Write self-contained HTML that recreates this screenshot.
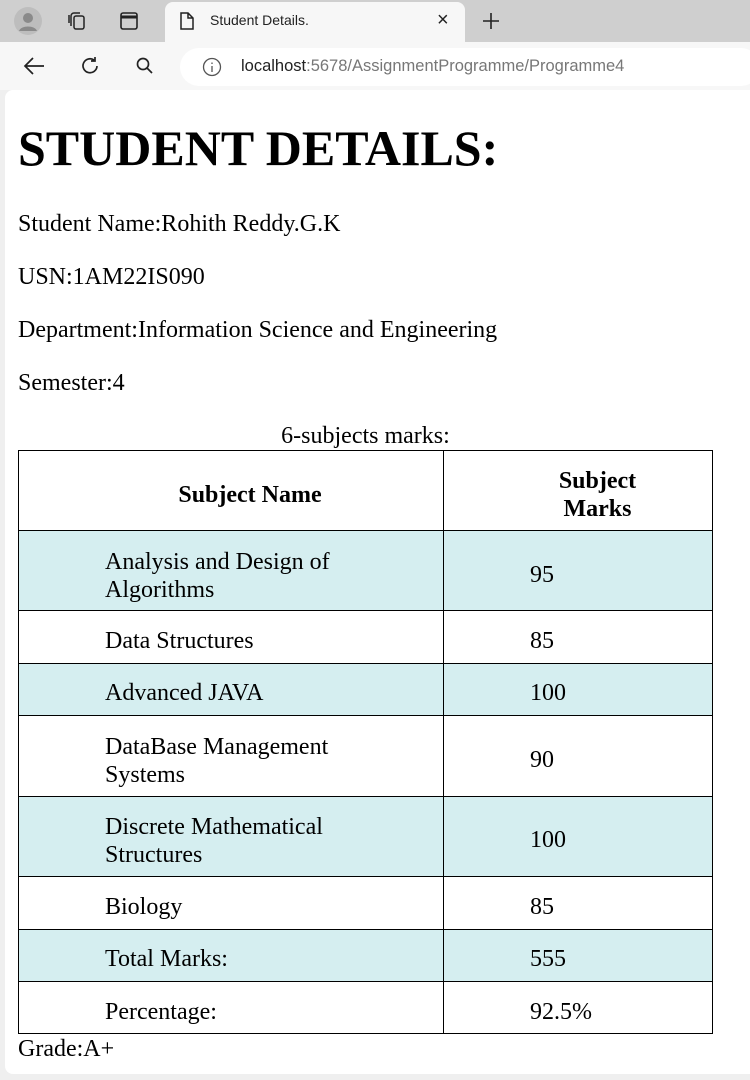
<!DOCTYPE html>
<html><head><meta charset="utf-8"><style>
*{margin:0;padding:0;box-sizing:border-box}
body{width:750px;height:1080px;background:#efefef;position:relative;overflow:hidden;font-family:"Liberation Serif",serif;color:#000}
.abs{position:absolute;white-space:nowrap}
.ui{font-family:"Liberation Sans",sans-serif}
.t{font-size:24px;line-height:28px}
.row{position:absolute;left:18px;width:695px;border:1px solid #000;border-top:none}
.c1{position:absolute;left:424px;top:0;bottom:0;border-left:1px solid #000}
</style></head><body>
<div class="abs" style="left:0;top:0;width:750px;height:42px;background:#cfcfcf"></div>
<div class="abs" style="left:165px;top:2px;width:300px;height:42px;background:#f7f7f7;border-radius:8px 8px 0 0"></div>
<div class="abs" style="left:0;top:42px;width:750px;height:48px;background:#f7f7f7"></div>
<svg class="abs" style="left:14px;top:7px" width="28" height="28" viewBox="0 0 28 28"><circle cx="14" cy="14" r="14" fill="#bdbdbd"/><circle cx="14" cy="11" r="5" fill="#8a8a8a"/><path d="M5 24c2-6 16-6 18 0" fill="#8a8a8a"/></svg>
<svg class="abs" style="left:66px;top:10px" width="22" height="22" viewBox="0 0 22 22" fill="none" stroke="#222" stroke-width="1.5"><rect x="8" y="6" width="10" height="13" rx="2"/><path d="M5 16V6a3 3 0 0 1 3-3h6"/><path d="M3 13V5"/></svg>
<svg class="abs" style="left:119px;top:11px" width="20" height="20" viewBox="0 0 20 20" fill="none" stroke="#222" stroke-width="1.6"><rect x="2" y="2" width="16" height="16" rx="2"/><path d="M2 6h16" stroke-width="3"/></svg>
<svg class="abs" style="left:178px;top:11px" width="18" height="20" viewBox="0 0 18 20" fill="none" stroke="#222" stroke-width="1.5"><path d="M3 2h7l5 5v11H3z M10 2v5h5"/></svg>
<div class="abs ui" style="left:210px;top:12px;font-size:14px;color:#222">Student Details.</div>
<div class="abs ui" style="left:437px;top:9px;font-size:20px;color:#222">×</div>
<svg class="abs" style="left:481px;top:11px" width="20" height="20" viewBox="0 0 20 20" stroke="#222" stroke-width="1.6"><path d="M10 2v16M2 10h16"/></svg>
<svg class="abs" style="left:22px;top:55px" width="24" height="22" viewBox="0 0 24 22" fill="none" stroke="#222" stroke-width="1.7"><path d="M22 11H3M11 3l-8 8 8 8"/></svg>
<svg class="abs" style="left:79px;top:55px" width="22" height="22" viewBox="0 0 22 22" fill="none" stroke="#222" stroke-width="1.7"><path d="M18 11a7 7 0 1 1-3-6M16 2v4h-4"/></svg>
<svg class="abs" style="left:135px;top:56px" width="20" height="20" viewBox="0 0 20 20" fill="none" stroke="#222" stroke-width="1.7"><circle cx="8" cy="8" r="5.5"/><path d="M12 12l5 5"/></svg>
<div class="abs" style="left:180px;top:48px;width:580px;height:38px;background:#fff;border-radius:19px"></div>
<svg class="abs" style="left:202px;top:57px" width="20" height="20" viewBox="0 0 20 20" fill="none" stroke="#555" stroke-width="1.3"><circle cx="10" cy="10" r="8.5"/><path d="M10 9v6M10 5.5v1.5"/></svg>
<div class="abs ui" style="left:241px;top:57px;font-size:16.5px;color:#222">localhost<span style="color:#777">:5678/AssignmentProgramme/Programme4</span></div>
<div class="abs" style="left:5px;top:90px;width:760px;height:984px;background:#fff;border-radius:8px"></div>
<div class="abs" style="left:18px;top:118px;font-size:50px;font-weight:bold;line-height:60px">STUDENT DETAILS:</div>
<div class="abs t" style="left:18px;top:210px">Student Name:Rohith Reddy.G.K</div>
<div class="abs t" style="left:18px;top:263px">USN:1AM22IS090</div>
<div class="abs t" style="left:18px;top:316px">Department:Information Science and Engineering</div>
<div class="abs t" style="left:18px;top:369px">Semester:4</div>
<div class="abs t" style="left:18px;width:695px;text-align:center;top:422px">6-subjects marks:</div>
<div class="row" style="top:450px;height:81px;border-top:1px solid #000"><div class="c1"></div>
<div class="abs t" style="left:0;width:462px;text-align:center;top:30px;font-weight:bold">Subject Name</div>
<div class="abs t" style="left:538px;top:16px;font-weight:bold;text-align:center;width:81px;white-space:normal">Subject Marks</div></div>
<div class="row" style="top:531px;height:80px;background:#d5eef0"><div class="c1"></div>
<div class="abs t" style="left:86px;top:17px">Analysis and Design of<br>Algorithms</div><div class="abs t" style="left:511px;top:30px">95</div></div>
<div class="row" style="top:611px;height:53px"><div class="c1"></div>
<div class="abs t" style="left:86px;top:16px">Data Structures</div><div class="abs t" style="left:511px;top:16px">85</div></div>
<div class="row" style="top:664px;height:52px;background:#d5eef0"><div class="c1"></div>
<div class="abs t" style="left:86px;top:15px">Advanced JAVA</div><div class="abs t" style="left:511px;top:15px">100</div></div>
<div class="row" style="top:716px;height:81px"><div class="c1"></div>
<div class="abs t" style="left:86px;top:17px">DataBase Management<br>Systems</div><div class="abs t" style="left:511px;top:30px">90</div></div>
<div class="row" style="top:797px;height:80px;background:#d5eef0"><div class="c1"></div>
<div class="abs t" style="left:86px;top:16px">Discrete Mathematical<br>Structures</div><div class="abs t" style="left:511px;top:29px">100</div></div>
<div class="row" style="top:877px;height:53px"><div class="c1"></div>
<div class="abs t" style="left:86px;top:16px">Biology</div><div class="abs t" style="left:511px;top:16px">85</div></div>
<div class="row" style="top:930px;height:52px;background:#d5eef0"><div class="c1"></div>
<div class="abs t" style="left:86px;top:15px">Total Marks:</div><div class="abs t" style="left:511px;top:15px">555</div></div>
<div class="row" style="top:982px;height:52px"><div class="c1"></div>
<div class="abs t" style="left:86px;top:16px">Percentage:</div><div class="abs t" style="left:511px;top:16px">92.5%</div></div>
<div class="abs t" style="left:18px;top:1035px">Grade:A+</div>
</body></html>
